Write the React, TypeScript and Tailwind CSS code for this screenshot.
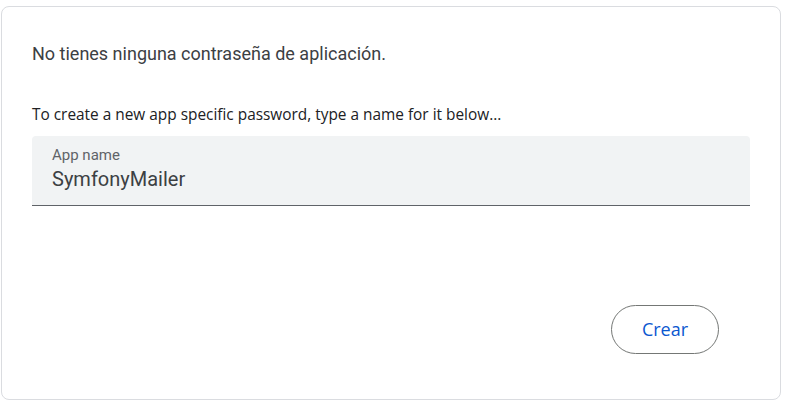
export default function App() {
  return (
    <div className="w-[790px] h-[410px] bg-white pt-[6px] pl-[1px] font-['Roboto',sans-serif]">
      <div className="w-[780px] h-[394px] border border-[#dadce0] rounded-[8px] flex flex-col px-[30px]">
        <p className="mt-[35px] text-[18px] leading-[24px] text-[#3c4043] font-['Roboto',sans-serif]">
          No tienes ninguna contraseña de aplicación.
        </p>
        <p className="mt-[39px] text-[15.4px] leading-[20px] text-[#202124] font-['Open_Sans',sans-serif]">
          To create a new app specific password, type a name for it below...
        </p>
        <div className="mt-[11px] h-[70px] bg-[#f1f3f4] rounded-t-[4px] border-b border-[#5f6368] flex flex-col px-[20px] pt-[11px]">
          <span className="text-[15px] leading-[16px] text-[#5f6368]">App name</span>
          <span className="mt-[4px] text-[20px] leading-[24px] text-[#3c4043]">SymfonyMailer</span>
        </div>
        <div className="flex justify-end mt-[99px] pr-[31px]">
          <button className="w-[108px] h-[49px] rounded-full border border-[#747775] text-[18px] text-[#0b57d0] font-['Open_Sans',sans-serif]">
            Crear
          </button>
        </div>
      </div>
    </div>
  );
}
